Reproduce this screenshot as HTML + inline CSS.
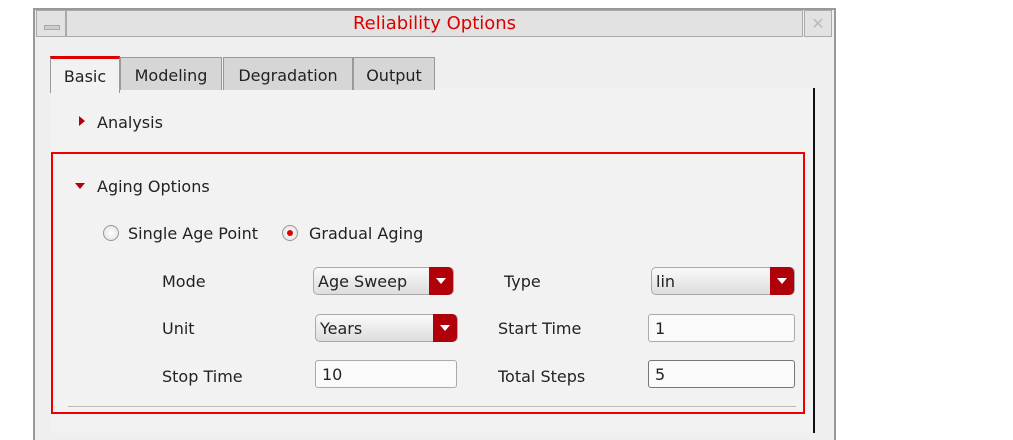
<html><head><style>
body{margin:0;width:1013px;height:433px;background:#fff;position:relative;overflow:hidden;font-family:"DejaVu Sans","Liberation Sans",sans-serif;font-size:16px;color:#222}
.a{position:absolute}
.win{left:33px;top:8px;width:799px;height:430px;background:#efefef;border:2px solid #999;border-bottom:none}
.tb{background:#e2e2e2;border:1px solid #aaa}
.tab{top:57px;height:32px;background:#d6d6d6;border:1px solid #999;border-bottom:none;line-height:36px;text-align:center}
.lbl{line-height:20px}
.dd{height:28px;border:1px solid #aaa;border-radius:5px;background:linear-gradient(#fafafa,#ddd);line-height:28px;padding-left:4px;box-sizing:border-box}
.dd b{position:absolute;right:0;top:-1px;width:24px;height:28px;background:#b0000a;border-radius:0 5px 5px 0}
.dd b:after{content:"";position:absolute;left:7px;top:11px;border:5px solid transparent;border-top:6px solid #fff;border-bottom:0}
.tx{height:28px;border:1px solid #aaa;border-radius:3px;background:#fafafa;line-height:28px;padding-left:6px;box-sizing:border-box}
.rad{width:16px;height:16px;border-radius:50%;border:1px solid #999;background:radial-gradient(#fff,#ddd);box-sizing:border-box}
</style></head><body>
<div class="a win"></div>
<div class="a tb" style="left:36px;top:10px;width:28px;height:25px"><div class="a" style="left:7px;top:14px;width:14px;height:3px;background:#ccc;border:1px solid #aaa"></div></div>
<div class="a tb" style="left:66px;top:10px;width:735px;height:25px;text-align:center;color:#d00;font-size:18px;line-height:25px">Reliability Options</div>
<div class="a tb" style="left:804px;top:10px;width:26px;height:25px;color:#bbb;text-align:center;line-height:25px;font-size:16px">✕</div>
<div class="a" style="left:51px;top:88px;width:762px;height:345px;background:#f2f2f2;border-right:2px solid #111"></div>
<div class="a tab" style="left:50px;top:56px;width:68px;height:34px;background:#f2f2f2;border-top:3px solid #d00">Basic</div>
<div class="a tab" style="left:120px;width:100px">Modeling</div>
<div class="a tab" style="left:223px;width:128px">Degradation</div>
<div class="a tab" style="left:353px;width:80px">Output</div>
<div class="a" style="left:79px;top:116px;border:5px solid transparent;border-left:6px solid #b0000a;border-right:0"></div>
<div class="a lbl" style="left:97px;top:113px">Analysis</div>
<div class="a" style="left:51px;top:152px;width:750px;height:258px;border:2px solid #e00"></div>
<div class="a" style="left:68px;top:406px;width:728px;height:1px;background:#bbb"></div>
<div class="a" style="left:75px;top:183px;border:5px solid transparent;border-top:6px solid #b0000a;border-bottom:0"></div>
<div class="a lbl" style="left:97px;top:177px">Aging Options</div>
<div class="a rad" style="left:103px;top:225px"></div>
<div class="a lbl" style="left:128px;top:224px">Single Age Point</div>
<div class="a rad" style="left:282px;top:225px"><div class="a" style="left:4px;top:4px;width:6px;height:6px;border-radius:50%;background:#d00"></div></div>
<div class="a lbl" style="left:309px;top:224px">Gradual Aging</div>
<div class="a lbl" style="left:162px;top:272px">Mode</div>
<div class="a lbl" style="left:162px;top:319px">Unit</div>
<div class="a lbl" style="left:162px;top:367px">Stop Time</div>
<div class="a lbl" style="left:504px;top:272px">Type</div>
<div class="a lbl" style="left:498px;top:319px">Start Time</div>
<div class="a lbl" style="left:498px;top:367px">Total Steps</div>
<div class="a dd" style="left:313px;top:267px;width:141px">Age Sweep<b></b></div>
<div class="a dd" style="left:315px;top:314px;width:143px">Years<b></b></div>
<div class="a tx" style="left:315px;top:360px;width:142px">10</div>
<div class="a dd" style="left:651px;top:267px;width:144px">lin<b></b></div>
<div class="a tx" style="left:648px;top:314px;width:147px">1</div>
<div class="a tx" style="left:648px;top:360px;width:147px;border-color:#777">5</div>
</body></html>
